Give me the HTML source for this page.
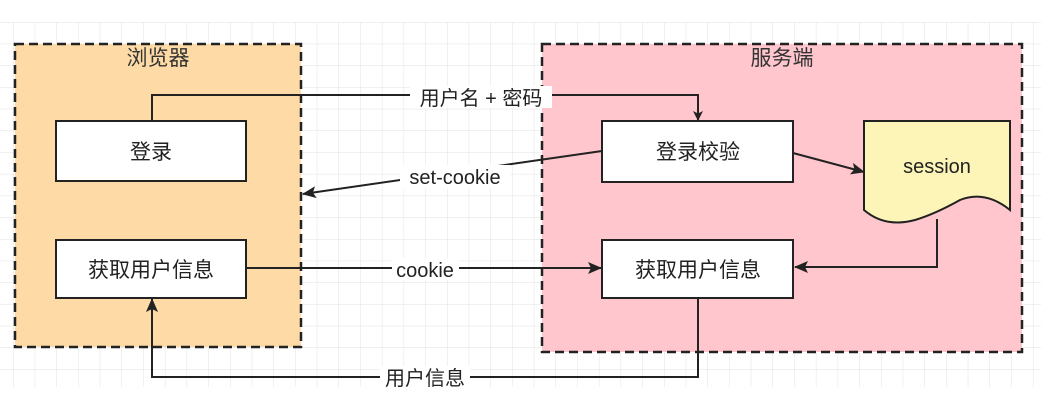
<!DOCTYPE html>
<html><head><meta charset="utf-8"><style>
body{margin:0;width:1041px;height:408px;overflow:hidden;background:#fff;font-family:"Liberation Sans","Noto Sans CJK SC",sans-serif}
</style></head><body>
<svg width="1041" height="408" xmlns="http://www.w3.org/2000/svg" font-family="Liberation Sans, Noto Sans CJK SC, sans-serif">
<defs>
<pattern id="g" x="13" y="22" width="21.7" height="21.7" patternUnits="userSpaceOnUse">
<path d="M0 0H21.7M0 0V21.7" stroke="#e2e2e2" stroke-width="1" fill="none"/>
</pattern>
<marker id="a" markerWidth="10" markerHeight="10" refX="9" refY="5" orient="auto" markerUnits="userSpaceOnUse" viewBox="0 0 10 10">
<path d="M0 0L10 5L0 10L2.5 5Z" fill="#222"/>
</marker>
<marker id="b" markerWidth="14" markerHeight="14" refX="13" refY="7" orient="auto" markerUnits="userSpaceOnUse" viewBox="0 0 14 14">
<path d="M0 1L14 7L0 13L3 7Z" fill="#222"/>
</marker>
</defs>
<rect x="0" y="22" width="1041" height="365" fill="url(#g)"/>
<rect x="15" y="44" width="286" height="303" fill="#fddaa6" stroke="#222" stroke-width="2.5" stroke-dasharray="9,5"/>
<rect x="542" y="44" width="480" height="308" fill="#ffc6cd" stroke="#222" stroke-width="2.5" stroke-dasharray="9,5"/>
<text x="158" y="65" font-size="21" fill="#333" text-anchor="middle">浏览器</text>
<text x="782" y="65" font-size="21" fill="#333" text-anchor="middle">服务端</text>
<g fill="#fff" stroke="#222" stroke-width="2">
<rect x="56" y="121" width="190" height="60"/>
<rect x="56" y="240" width="190" height="58"/>
<rect x="602" y="121" width="191" height="61"/>
<rect x="602" y="240" width="191" height="58"/>
</g>
<path d="M864 121H1010V210Q985 190 960 200Q935 214 915 220Q885 228 864 210Z" fill="#fdf5b8" stroke="#222" stroke-width="2"/>
<g font-size="21" fill="#222" text-anchor="middle">
<text x="151" y="159">登录</text>
<text x="151" y="277">获取用户信息</text>
<text x="698" y="159">登录校验</text>
<text x="698" y="277">获取用户信息</text>
<text x="937" y="173" font-size="20">session</text>
</g>
<g stroke="#222" stroke-width="2" fill="none">
<path d="M152 121V95H698V120" marker-end="url(#a)"/>
<path d="M602 151L303 194" marker-end="url(#b)"/>
<path d="M793 153L864 172" marker-end="url(#b)"/>
<path d="M937 219V267H795" marker-end="url(#b)"/>
<path d="M246 268H601" marker-end="url(#b)"/>
<path d="M698 298V377H152V299" marker-end="url(#b)"/>
</g>
<g font-size="20" fill="#222" text-anchor="middle">
<rect x="410" y="86" width="142" height="22" fill="#fff"/>
<text x="481" y="105">用户名 + 密码</text>
<rect x="400" y="165" width="110" height="24" fill="#fff"/>
<text x="455" y="184">set-cookie</text>
<rect x="392" y="258" width="67" height="22" fill="#fff"/>
<text x="425" y="277">cookie</text>
<rect x="380" y="366" width="90" height="22" fill="#fff"/>
<text x="425" y="385">用户信息</text>
</g>
</svg>
</body></html>
